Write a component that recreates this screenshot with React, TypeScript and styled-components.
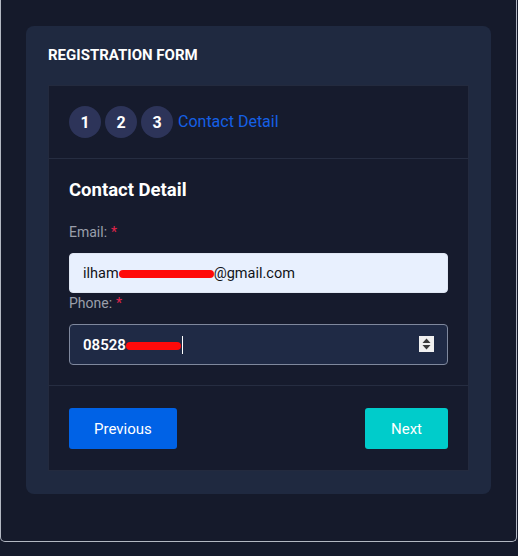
import React from "react";
import styled, { createGlobalStyle } from "styled-components";

const Global = createGlobalStyle`
  html, body { margin: 0; padding: 0; background: #151a2b; }
  body { font-family: Roboto, "Liberation Sans", sans-serif; }
  * { box-sizing: border-box; }
`;

const Frame = styled.div`
  width: 517px;
  height: 542px;
  border: 1px solid #b3b8c3;
  border-top: none;
  border-radius: 0 0 5px 5px;
  padding: 26px 25px 0;
  background: #151a2b;
`;

const Card = styled.section`
  background: #1f2940;
  border-radius: 8px;
  padding: 20px 22px 23px;
`;

const CardTitle = styled.h1`
  margin: 0 0 21px;
  font-size: 15px;
  line-height: 18px;
  font-weight: 700;
  color: #ffffff;
  text-transform: uppercase;
`;

const Panel = styled.div`
  background: #161b2d;
  border: 1px solid #232a3e;
`;

const Section = styled.div<{ $divided?: boolean }>`
  padding: 20px;
  border-bottom: ${(p) => (p.$divided ? "1px solid #262d41" : "none")};
`;

const Steps = styled.div`
  display: flex;
  align-items: center;
  gap: 4px;
`;

const StepCircle = styled.span`
  width: 32px;
  height: 32px;
  border-radius: 50%;
  background: #2d3459;
  color: #ffffff;
  font-weight: 700;
  font-size: 16px;
  display: flex;
  align-items: center;
  justify-content: center;
`;

const StepLabel = styled.span`
  color: #1560e6;
  font-size: 16px;
  font-weight: 400;
  margin-left: 1px;
  margin-top: -1px;
`;

const Heading = styled.h2`
  margin: 0 0 21px;
  font-size: 18.5px;
  line-height: 22px;
  font-weight: 700;
  color: #ffffff;
`;

const Label = styled.label`
  display: block;
  font-size: 14px;
  line-height: 20px;
  color: #9a9fab;
  margin-bottom: 11px;
`;

const Req = styled.span`
  color: #e0244b;
  margin-left: 4px;
`;

const Field = styled.div<{ $variant: "auto" | "dark" }>`
  position: relative;
  height: ${(p) => (p.$variant === "auto" ? "40px" : "41px")};
  border-radius: 4px;
  display: flex;
  align-items: center;
  padding: 0 13px;
  font-size: ${(p) => (p.$variant === "auto" ? "14.5px" : "15px")};
  background: ${(p) => (p.$variant === "auto" ? "#e8f0fe" : "#1f2a45")};
  color: ${(p) => (p.$variant === "auto" ? "#111318" : "#ffffff")};
  font-weight: ${(p) => (p.$variant === "auto" ? 400 : 600)};
  border: 1px solid ${(p) => (p.$variant === "auto" ? "#dfe6f3" : "#7f889d")};
  white-space: nowrap;
`;

const Redacted = styled.span<{ $w: number }>`
  display: inline-block;
  width: ${(p) => p.$w}px;
  height: 8px;
  background: #ff0a0a;
  border-radius: 4px;
  margin-top: 2px;
`;

const Caret = styled.span`
  display: inline-block;
  width: 1px;
  height: 18px;
  background: #ffffff;
  margin-left: 1px;
`;

const Spinner = styled.span`
  position: absolute;
  right: 13px;
  top: 11px;
  width: 15px;
  height: 16px;
  background: #f0f0f0;
  display: flex;
  align-items: center;
  justify-content: center;
`;

const Footer = styled.div`
  padding: 22px 20px 21px;
  display: flex;
  justify-content: space-between;
  align-items: center;
`;

const Button = styled.button<{ $kind: "primary" | "accent" }>`
  height: 41px;
  border: none;
  border-radius: 3px;
  font-family: Roboto, "Liberation Sans", sans-serif;
  font-size: 15px;
  color: #ffffff;
  padding: 0 ${(p) => (p.$kind === "primary" ? "25px" : "26px")};
  background: ${(p) => (p.$kind === "primary" ? "#0062e6" : "#00cccb")};
  cursor: pointer;
`;

export default function App() {
  return (
    <>
      <Global />
      <Frame>
        <Card>
          <CardTitle>Registration Form</CardTitle>
          <Panel>
            <Section $divided>
              <Steps>
                <StepCircle>1</StepCircle>
                <StepCircle>2</StepCircle>
                <StepCircle>3</StepCircle>
                <StepLabel>Contact Detail</StepLabel>
              </Steps>
            </Section>
            <Section $divided>
              <Heading>Contact Detail</Heading>
              <Label>
                Email:<Req>*</Req>
              </Label>
              <Field $variant="auto">
                ilham
                <Redacted $w={95} />
                @gmail.com
              </Field>
              <Label>
                Phone:<Req>*</Req>
              </Label>
              <Field $variant="dark">
                08528
                <Redacted $w={55} />
                <Caret />
                <Spinner>
                  <svg width="9" height="12" viewBox="0 0 9 12">
                    <path d="M4.5 0.5 L8.5 5 H0.5 Z" fill="#3a3a3a" />
                    <path d="M4.5 11.5 L8.5 7 H0.5 Z" fill="#3a3a3a" />
                  </svg>
                </Spinner>
              </Field>
            </Section>
            <Footer>
              <Button $kind="primary">Previous</Button>
              <Button $kind="accent">Next</Button>
            </Footer>
          </Panel>
        </Card>
      </Frame>
    </>
  );
}
